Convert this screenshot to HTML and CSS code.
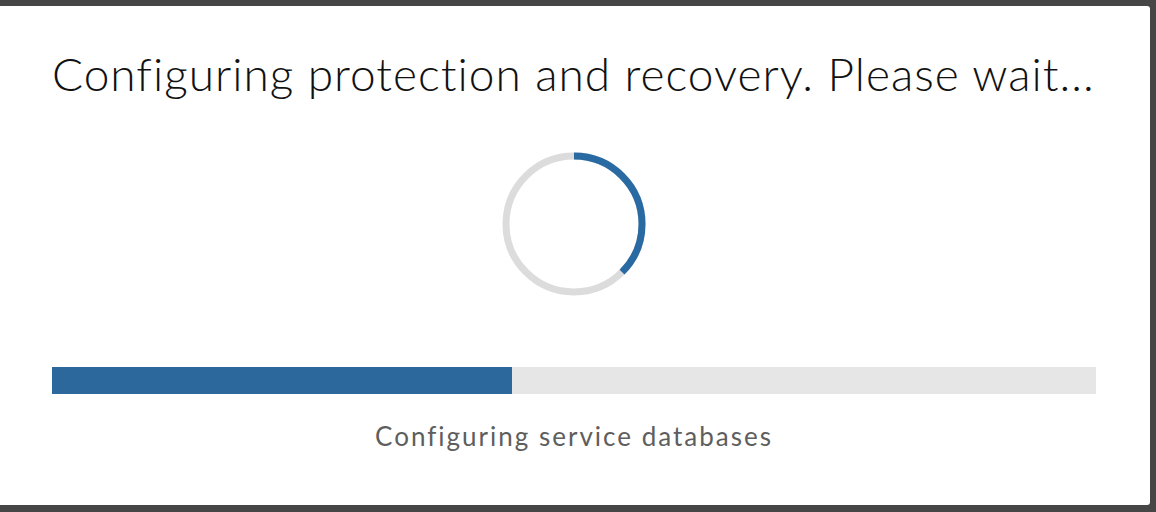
FILE: index.html
```html
<!DOCTYPE html>
<html lang="en">
<head>
<meta charset="utf-8">
<title>Configuring protection and recovery</title>
<link rel="stylesheet" href="styles.css">
</head>
<body>
<div class="backdrop">
  <div class="modal">
    <h1 class="title">Configuring protection and recovery. Please wait...</h1>
    <div class="spinner-wrap">
      <svg class="spinner" width="146" height="146" viewBox="0 0 146 146">
        <circle cx="73" cy="73" r="68" fill="none" stroke="#dcdcdc" stroke-width="7"/>
        <circle cx="73" cy="73" r="68" fill="none" stroke="#2a6aa3" stroke-width="7"
          stroke-dasharray="160 400" transform="rotate(-90 73 73)"/>
      </svg>
    </div>
    <div class="progress">
      <div class="progress-fill" style="width:44.1%"></div>
    </div>
    <p class="status">Configuring service databases</p>
  </div>
</div>
</body>
</html>
```

FILE: styles.css
```css
html, body {
  margin: 0;
  padding: 0;
  background: #464646;
}

.backdrop {
  padding: 6px 6px 7px 0;
  height: 512px;
  box-sizing: border-box;
}

.modal {
  background: #ffffff;
  height: 499px;
  border-radius: 0 3px 3px 0;
  box-sizing: border-box;
  padding: 40px 54px 0 52px;
  display: flex;
  flex-direction: column;
}

.title {
  margin: 0;
  font-family: "Lato", "Liberation Sans", sans-serif;
  font-weight: 300;
  font-size: 46px;
  letter-spacing: 1px;
  line-height: 56px;
  color: #111;
  white-space: nowrap;
}

.spinner-wrap {
  display: flex;
  justify-content: center;
  margin-top: 49px;
}

.spinner {
  display: block;
}

.progress {
  margin-top: 70px;
  height: 27px;
  background: #e6e6e6;
}

.progress-fill {
  height: 100%;
  background: #2c689c;
}

.status {
  margin: 27px 0 0;
  text-align: center;
  font-family: "Lato", "Liberation Sans", sans-serif;
  font-size: 26px;
  letter-spacing: 2px;
  line-height: 30px;
  color: #5e5e5e;
}
```
